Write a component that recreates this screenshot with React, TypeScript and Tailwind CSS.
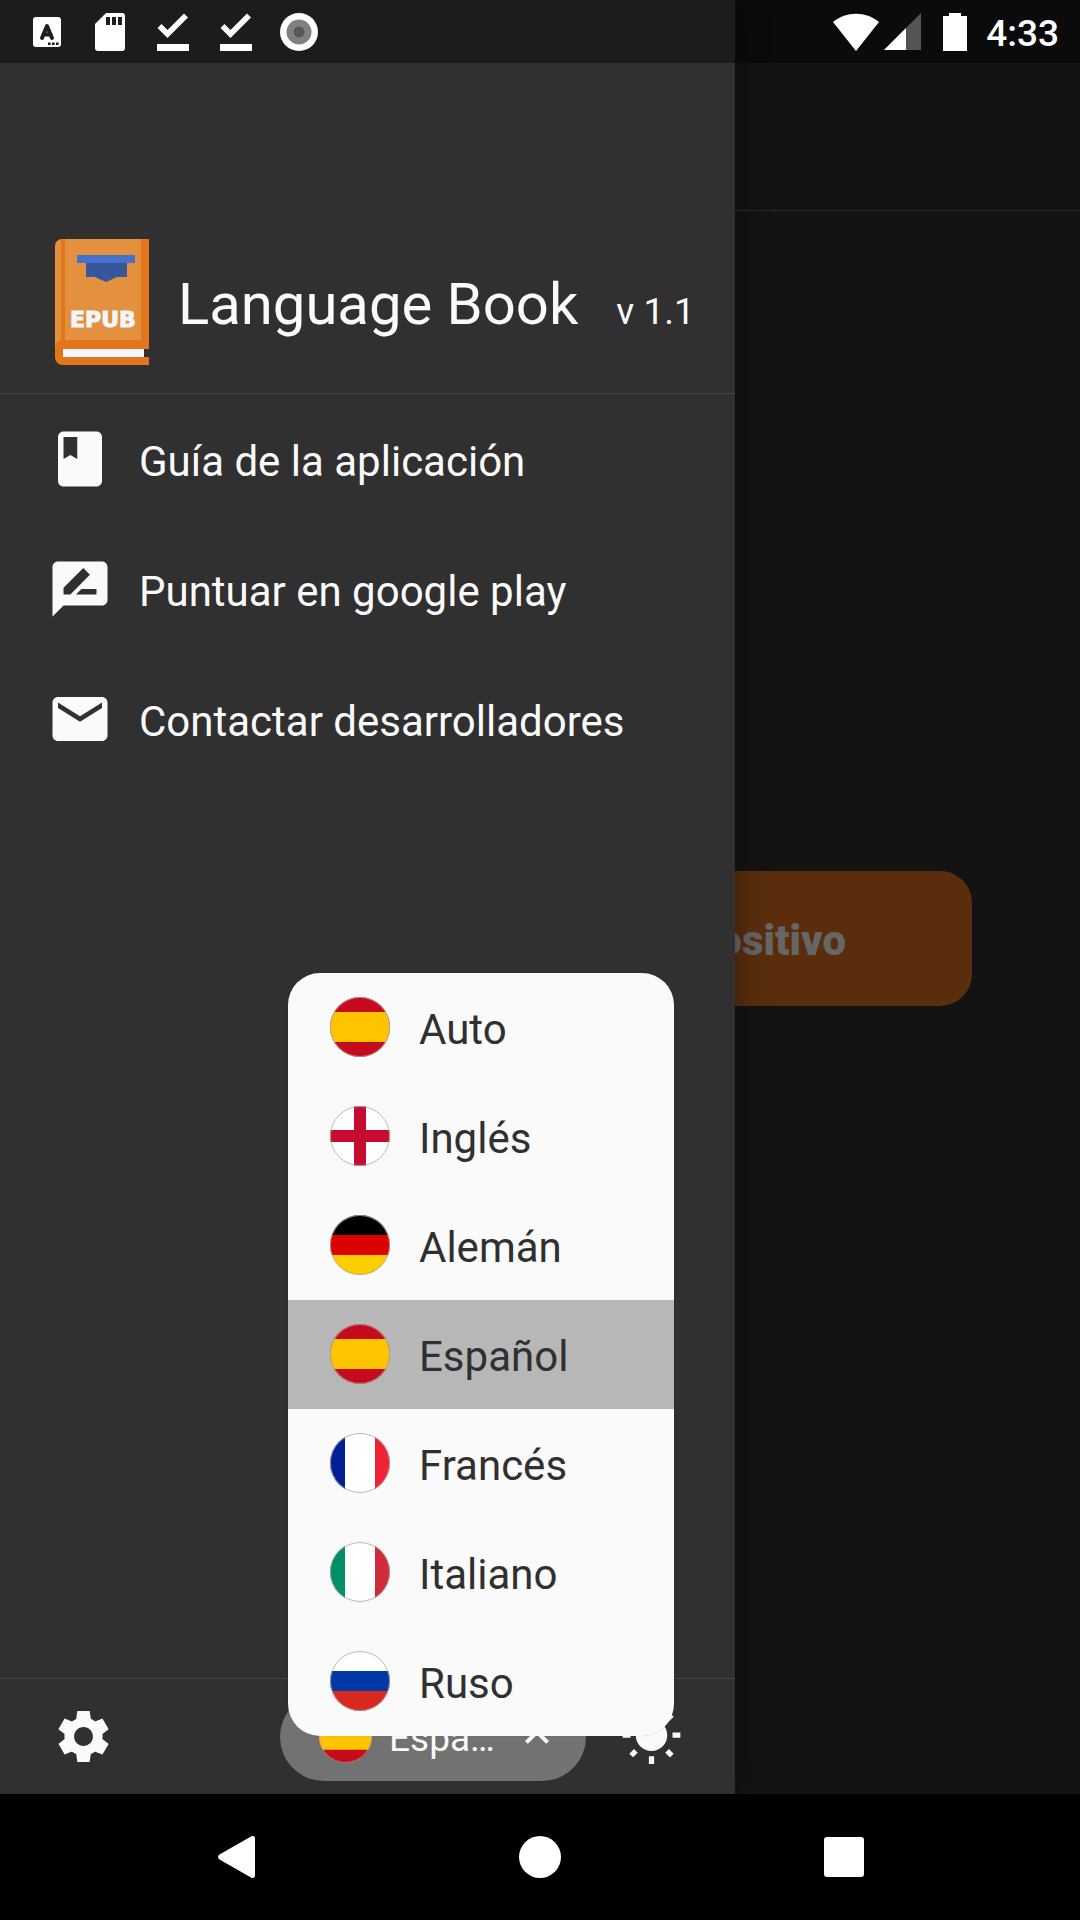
import type { ReactNode } from 'react';
import { MdBook, MdEmail, MdKeyboardArrowUp, MdWbSunny } from 'react-icons/md';

type FlagKind = 'es' | 'en' | 'de' | 'fr' | 'it' | 'ru';

const flagShapes: Record<FlagKind, ReactNode> = {
  es: (
    <>
      <path fill="#c60b1e" d="M0 0h60v60H0z" />
      <path fill="#ffc400" d="M0 15h60v30H0z" />
    </>
  ),
  en: (
    <>
      <path fill="#fff" d="M0 0h60v60H0z" />
      <path fill="#c60c30" d="M24 0h12v60H24zM0 24h60v12H0z" />
    </>
  ),
  de: (
    <>
      <path fill="#000" d="M0 0h60v20H0z" />
      <path fill="#dd0000" d="M0 20h60v20H0z" />
      <path fill="#ffce00" d="M0 40h60v20H0z" />
    </>
  ),
  fr: (
    <>
      <path fill="#fff" d="M0 0h60v60H0z" />
      <path fill="#001e96" d="M0 0h15v60H0z" />
      <path fill="#ee2436" d="M45 0h15v60H45z" />
    </>
  ),
  it: (
    <>
      <path fill="#fff" d="M0 0h60v60H0z" />
      <path fill="#009067" d="M0 0h15v60H0z" />
      <path fill="#ce2b3c" d="M45 0h15v60H45z" />
    </>
  ),
  ru: (
    <>
      <path fill="#fff" d="M0 0h60v20H0z" />
      <path fill="#0038a6" d="M0 20h60v20H0z" />
      <path fill="#d62a1e" d="M0 40h60v20H0z" />
    </>
  ),
};

function Flag({ kind, id, className }: { kind: FlagKind; id: string; className: string }) {
  return (
    <svg viewBox="0 0 60 60" className={className} aria-hidden="true">
      <clipPath id={id}>
        <circle cx="30" cy="30" r="30" />
      </clipPath>
      <g clipPath={`url(#${id})`}>{flagShapes[kind]}</g>
      <circle cx="30" cy="30" r="29.5" fill="none" stroke="#a8a8a0" strokeOpacity="0.8" />
    </svg>
  );
}

function BookLogo() {
  return (
    <svg viewBox="0 0 94 126" className="h-[126px] w-[94px] shrink-0" role="img" aria-label="EPUB">
      <path fill="#e3913f" d="M6 0h82v108H0V6Q1 1 6 0z" />
      <path fill="#e3751b" d="M6 0h4v101h76V0h8v110H8v8h86v8H7q-6-1-7-7v-11q1-6 6-7z" />
      <path fill="#f3f6fb" d="M8 110h81v8H8z" />
      <path fill="#4472cc" d="M22 16h58v8H22z" />
      <path fill="#38569c" d="M31 24h41v14H62l-11 5-11-5h-9z" />
      <text x="48" y="88" textAnchor="middle" fontFamily="'DejaVu Sans', sans-serif" fontWeight="700" fontSize="22" fill="#f3f6fb" stroke="#f3f6fb" strokeWidth="1">
        EPUB
      </text>
    </svg>
  );
}

function RateIcon({ className }: { className: string }) {
  return (
    <svg viewBox="0 0 24 24" className={className} fill="currentColor" aria-hidden="true">
      <path fillRule="evenodd" d="M20 2H4c-1.100 0-2 .9-2 2v18l4-4h14c1.100 0 2-.9 2-2V4c0-1.100-.9-2-2-2zM6 14v-2.500L13.200 4.400l2.400 2.400L8.500 14zm12 0h-7.500l2-2H18z" />
    </svg>
  );
}

function GearIcon({ className }: { className: string }) {
  return (
    <svg viewBox="0 0 24 24" className={className} fill="currentColor" aria-hidden="true">
      <path d="M19.44 12.99l-.01.02c.04-.33.08-.67.08-1.01 0-.34-.03-.66-.07-.99l.01.02 2.44-1.92-2.43-4.22-2.87 1.16.01.01c-.52-.4-1.09-.74-1.71-1h.01L14.44 2H9.57l-.44 3.07h.01c-.62.26-1.19.6-1.71 1l.01-.01-2.88-1.17-2.44 4.22 2.44 1.92.01-.02c-.04.33-.07.65-.07.99 0 .34.03.68.08 1.01l-.01-.02-2.1 1.65-.33.26 2.43 4.2 2.88-1.15-.02-.04c.53.41 1.1.75 1.73 1.01h-.03L9.58 22h4.85s.03-.18.06-.42l.38-2.65h-.01c.62-.26 1.2-.6 1.73-1.01l-.02.04 2.88 1.15 2.43-4.2s-.14-.12-.33-.26l-2.11-1.66zM12 15.7c-2.04 0-3.7-1.66-3.7-3.7s1.66-3.7 3.7-3.7 3.7 1.66 3.7 3.7-1.66 3.7-3.7 3.7z" />
    </svg>
  );
}

function StatusSlot({ children }: { children: ReactNode }) {
  return <span className="flex w-[63px] justify-center">{children}</span>;
}

function DoneIcon() {
  return (
    <svg viewBox="0 0 32 38" className="h-[38px] w-8" aria-hidden="true">
      <path fill="none" stroke="#fff" strokeWidth="5.6" d="M2.500 13l8 8L29 2.500" />
      <path fill="#fff" d="M0 31h32v7H0z" />
    </svg>
  );
}

function StatusBar() {
  return (
    <header className="z-20 col-start-1 row-start-1 flex h-[63px] items-center justify-between self-start bg-black/40 pr-[21px] pl-[15px] text-white">
      <div className="flex items-center">
        <StatusSlot>
          <svg viewBox="0 0 28 30" className="h-[30px] w-7" aria-hidden="true">
            <rect width="28" height="30" rx="3" fill="#fff" />
            <path fill="none" stroke="#1e1e1e" strokeWidth="4" strokeLinecap="round" strokeLinejoin="round" d="M9 21L14 9 19 21M10.500 17.500h7" />
            <path fill="#1e1e1e" d="M15 25.500h2.600v2.600H15zM19 25.500h2.600v2.600H19zM23 25.500h2.600v2.600H23z" />
          </svg>
        </StatusSlot>
        <StatusSlot>
          <svg viewBox="0 0 30 38" className="h-[38px] w-[30px]" aria-hidden="true">
            <path fill="#fff" d="M11 0h16a3 3 0 013 3v32a3 3 0 01-3 3H3a3 3 0 01-3-3V11z" />
            <path fill="#1e1e1e" d="M11 4h4v8h-4zM17 4h4v8h-4zM23 4h4v8h-4z" />
          </svg>
        </StatusSlot>
        <StatusSlot>
          <DoneIcon />
        </StatusSlot>
        <StatusSlot>
          <DoneIcon />
        </StatusSlot>
        <StatusSlot>
          <svg viewBox="0 0 38 38" className="size-[38px]" aria-hidden="true">
            <circle cx="19" cy="19" r="19" fill="#fff" />
            <circle cx="19" cy="19" r="12.500" fill="#808080" />
            <circle cx="19" cy="19" r="5.500" fill="#585858" />
          </svg>
        </StatusSlot>
      </div>
      <div className="flex items-center">
        <svg viewBox="0 0 46 38" className="h-[38px] w-[46px]" aria-hidden="true">
          <path fill="#fff" d="M0 9C13-2 33-2 46 9L23 38z" />
        </svg>
        <svg viewBox="0 0 37 37" className="ml-[5px] size-[37px]" aria-hidden="true">
          <path fill="#555" d="M37 0v37H0z" />
          <path fill="#fff" d="M22 15v22H0z" />
        </svg>
        <svg viewBox="0 0 24 38" className="ml-[22px] h-[38px] w-6" aria-hidden="true">
          <path fill="#fff" d="M6 0h12v3h6v35H0V3h6z" />
        </svg>
        <time className="ml-[19px] pt-1 text-[37px] leading-[40px] font-medium">4:33</time>
      </div>
    </header>
  );
}

const menu = [
  { label: 'Guía de la aplicación', icon: <MdBook className="size-[66px]" aria-hidden="true" /> },
  { label: 'Puntuar en google play', icon: <RateIcon className="size-[66px]" /> },
  { label: 'Contactar desarrolladores', icon: <MdEmail className="size-[66px]" aria-hidden="true" /> },
];

const languages: { label: string; flag: FlagKind; selected?: boolean }[] = [
  { label: 'Auto', flag: 'es' },
  { label: 'Inglés', flag: 'en' },
  { label: 'Alemán', flag: 'de' },
  { label: 'Español', flag: 'es', selected: true },
  { label: 'Francés', flag: 'fr' },
  { label: 'Italiano', flag: 'it' },
  { label: 'Ruso', flag: 'ru' },
];

function LanguagePicker() {
  return (
    <div className="relative w-[306px]">
      <button type="button" aria-haspopup="listbox" aria-expanded="true" className="flex h-[88px] w-full items-center rounded-full bg-[#727272] pr-[25px] pl-[39px]">
        <Flag kind="es" id="flag-current" className="size-[53px] shrink-0" />
        <span className="ml-[17px] flex-1 pt-1 text-left text-[37px] leading-[44px]">Espa…</span>
        <MdKeyboardArrowUp className="size-12 shrink-0" aria-hidden="true" />
      </button>
      <div role="listbox" aria-label="Idioma" className="absolute bottom-[45px] left-2 z-10 w-[386px] overflow-hidden rounded-[32px] bg-[#fafafa] text-[#303030] shadow-[0_0_1px_rgba(0,0,0,0.3)]">
        {languages.map((l) => (
          <button
            key={l.label}
            type="button"
            role="option"
            aria-selected={!!l.selected}
            className="flex h-[109px] w-full items-center gap-[29px] px-[42px] text-left aria-selected:bg-[#b7b7b7]"
          >
            <Flag kind={l.flag} id={`flag-${l.label}`} className="size-[60px] shrink-0" />
            <span className="pt-1.5 text-[42px] leading-[50px]">{l.label}</span>
          </button>
        ))}
      </div>
    </div>
  );
}

function Drawer() {
  return (
    <aside className="z-10 col-start-1 row-start-1 flex w-[735px] max-w-full flex-col bg-[#303030] pt-[63px] text-[#fafafa] shadow-[0_0_32px_rgba(0,0,0,0.4)]">
      <div className="flex items-end border-b border-[#454545] pt-[176px] pb-7 pl-[55px]">
        <BookLogo />
        <div className="mb-[27px] ml-[29px] flex items-baseline gap-[38px]">
          <h1 className="text-[58px] leading-[68px]">Language Book</h1>
          <span className="text-[37px] leading-[44px]">v 1.1</span>
        </div>
      </div>
      <nav className="flex flex-1 flex-col">
        {menu.map((m) => (
          <a key={m.label} href="#" className="flex h-[130px] items-center gap-[26px] px-[47px]">
            {m.icon}
            <span className="pt-1.5 text-[42px] leading-[50px]">{m.label}</span>
          </a>
        ))}
      </nav>
      <div className="flex h-[116px] items-center border-t border-[#454545] pr-[52px] pl-[53px]">
        <button type="button" aria-label="Ajustes">
          <GearIcon className="size-[61px]" />
        </button>
        <div className="mr-[34px] ml-auto">
          <LanguagePicker />
        </div>
        <button type="button" aria-label="Tema claro">
          <MdWbSunny className="size-[63px]" aria-hidden="true" />
        </button>
      </div>
    </aside>
  );
}

function Library() {
  return (
    <main className="col-start-1 row-start-1 flex flex-col bg-[#131313]">
      <div className="h-[211px] border-b border-[#2a2a2a]" />
      <div className="flex flex-1 flex-col items-stretch px-[108px] pt-[660px]">
        <button type="button" className="flex h-[135px] items-center justify-end rounded-[32px] bg-[#5a2e0d] pt-1 pr-[126px] text-[42px] font-black text-[#666]">
          dispositivo
        </button>
      </div>
    </main>
  );
}

function NavigationBar() {
  return (
    <footer className="grid h-[126px] grid-cols-3 bg-black px-[84px]">
      <button type="button" aria-label="Atrás" className="flex items-center justify-center">
        <svg viewBox="0 0 37 42" className="h-[42px] w-[37px]" aria-hidden="true">
          <path fill="#fff" d="M33 .6c2-1.300 4-.5 4 2v36.800c0 2.500-2 3.300-4 2L1.500 23.500c-2-1.500-2-3.500 0-5z" />
        </svg>
      </button>
      <button type="button" aria-label="Inicio" className="flex items-center justify-center">
        <span className="size-[42px] rounded-full bg-white" />
      </button>
      <button type="button" aria-label="Recientes" className="flex items-center justify-center">
        <span className="size-10 rounded-[3px] bg-white" />
      </button>
    </footer>
  );
}

export default function App() {
  return (
    <div className="flex min-h-screen flex-col bg-black font-['Roboto',sans-serif]">
      <div className="grid flex-1 grid-cols-1 overflow-hidden">
        <Library />
        <Drawer />
        <StatusBar />
      </div>
      <NavigationBar />
    </div>
  );
}
